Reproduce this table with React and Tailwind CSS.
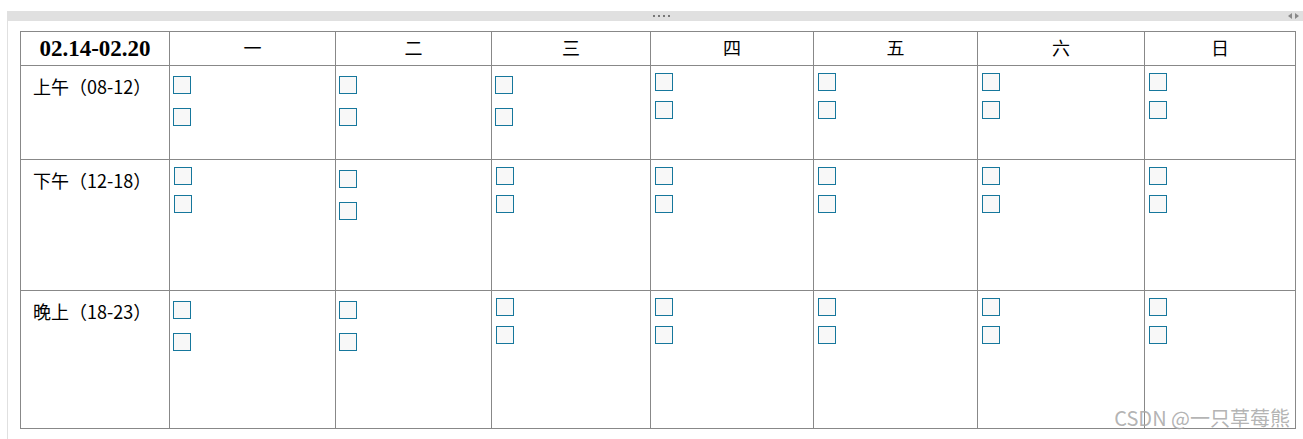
import React from 'react';

const days = ['一', '二', '三', '四', '五', '六', '日'];
const widths = ['w-[149px]', 'w-[166px]', 'w-[156px]', 'w-[159px]', 'w-[163px]', 'w-[164px]', 'w-[167px]', 'w-[151px]'];

// A = loose pair (lower start, wider gap), B = tight pair
const rows = [
  { label: '上午（08-12）', h: 'h-[94px]', cells: 'AAABBBB' },
  { label: '下午（12-18）', h: 'h-[131px]', cells: 'BABBBBB' },
  { label: '晚上（18-23）', h: 'h-[138px]', cells: 'AABBBBB' },
];

function Box() {
  return <div className="w-[18px] h-[18px] border border-[#16779c] bg-[#f8f8f8]" />;
}

function Pair({ kind }) {
  return kind === 'A' ? (
    <div className="flex flex-col gap-[14px] pt-[10px] pl-[3px]">
      <Box />
      <Box />
    </div>
  ) : (
    <div className="flex flex-col gap-[10px] pt-[7px] pl-[4px]">
      <Box />
      <Box />
    </div>
  );
}

export default function App() {
  return (
    <div className="relative w-full h-[439px] bg-white overflow-hidden">
      {/* splitter bar */}
      <div className="mt-[11px] ml-[7px] h-[10px] bg-[#e0e0e0] relative">
        <div className="absolute left-[646px] top-[4px] flex gap-[3px]">
          <span className="w-[2px] h-[2px] bg-[#777]" />
          <span className="w-[2px] h-[2px] bg-[#777]" />
          <span className="w-[2px] h-[2px] bg-[#777]" />
          <span className="w-[2px] h-[2px] bg-[#777]" />
        </div>
        <div className="absolute right-[4px] top-[2px] flex gap-[3px]">
          <svg width="4" height="6" viewBox="0 0 4 6"><path d="M4 0 L0 3 L4 6 Z" fill="#888" /></svg>
          <svg width="4" height="6" viewBox="0 0 4 6"><path d="M0 0 L4 3 L0 6 Z" fill="#888" /></svg>
        </div>
      </div>

      <div className="ml-[7px] border-l border-[#e0e0e0] h-[418px] pl-[12px] pt-[10px]">
        <table className="border-collapse table-fixed w-[1276px]">
          <thead>
            <tr className="h-[34px]">
              <th className={`${widths[0]} border border-[#888] p-0 text-center font-bold text-[23px] leading-[26px] text-black font-['Liberation_Serif',serif]`}>
                02.14-02.20
              </th>
              {days.map((d, i) => (
                <th
                  key={d}
                  className={`${widths[i + 1]} border border-[#888] p-0 pt-[1px] text-center font-normal text-[18px] leading-[26px] text-black font-['Liberation_Serif','Noto_Sans_CJK_SC',serif]`}
                >
                  {d}
                </th>
              ))}
            </tr>
          </thead>
          <tbody>
            {rows.map((r) => (
              <tr key={r.label} className={r.h}>
                <td className="border border-[#888] p-0 align-top">
                  <div className="pt-[8px] pl-[12px] text-[18px] leading-[24px] text-black font-['Noto_Sans_CJK_SC',sans-serif]">
                    {r.label}
                  </div>
                </td>
                {r.cells.split('').map((k, i) => (
                  <td key={i} className="border border-[#888] p-0 align-top">
                    <Pair kind={k} />
                  </td>
                ))}
              </tr>
            ))}
          </tbody>
        </table>
      </div>

      {/* watermark */}
      <div className="absolute right-[13px] top-[405px] text-[20px] leading-[26px] text-[#aaaaaa]/90 font-['Noto_Sans_CJK_SC',sans-serif]">
        CSDN @一只草莓熊
      </div>
    </div>
  );
}
